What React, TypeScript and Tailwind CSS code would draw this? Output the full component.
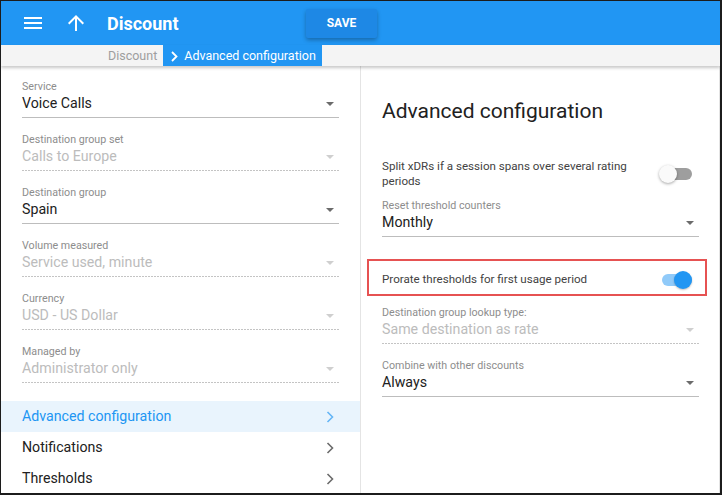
import React from 'react';

const font = { fontFamily: 'Roboto, "Noto Sans", Arial, sans-serif' };

const Caret = ({ disabled }: { disabled?: boolean }) => (
  <svg width="8" height="4" viewBox="0 0 8 4" className="mr-[5px] shrink-0">
    <polygon points="0,0 8,0 4,4" fill={disabled ? '#cfcfcf' : '#6b6b6b'} />
  </svg>
);

const Chevron = ({ color }: { color: string }) => (
  <svg width="8" height="12" viewBox="0 0 8 12" className="shrink-0">
    <path d="M1.5 1l5 5-5 5" fill="none" stroke={color} strokeWidth="1.6" />
  </svg>
);

type FieldProps = {
  label: string;
  value: string;
  disabled?: boolean;
  className?: string;
};

const Field = ({ label, value, disabled, className = '' }: FieldProps) => (
  <div className={className}>
    <div className="text-[10.7px] leading-[13px] text-[#8d8d8d]">{label}</div>
    <div
      className={
        'flex h-[20px] items-center justify-between pt-[2px] text-[14.2px] ' +
        (disabled ? 'text-[#bcbcbc]' : 'text-[#212121]')
      }
    >
      <span>{value}</span>
      <Caret disabled={disabled} />
    </div>
    <div className="mt-[4px]">
      {disabled ? (
        <div className="h-px bg-[linear-gradient(to_right,#c4c4c4_2px,transparent_2px)] bg-[length:3px_1px] bg-repeat-x" />
      ) : (
        <div className="h-px bg-[#bdbdbd]" />
      )}
    </div>
  </div>
);

const Toggle = ({ on }: { on?: boolean }) => (
  <div className="relative mr-[7px] h-[20px] w-[33px] shrink-0">
    <div
      className={
        'absolute left-[3px] right-0 top-[4px] h-[12px] rounded-full ' +
        (on ? 'bg-[#90caf9]' : 'bg-[#9e9e9e]')
      }
    />
    {on ? (
      <div className="absolute right-0 top-px h-[18px] w-[18px] rounded-full bg-[#2196f3] shadow-[0_1px_2px_rgba(0,0,0,0.25)]" />
    ) : (
      <div className="absolute left-0 top-px h-[18px] w-[18px] rounded-full bg-[#fafafa] shadow-[0_1px_3px_rgba(0,0,0,0.35)]" />
    )}
  </div>
);

const NavRow = ({ label, active }: { label: string; active?: boolean }) => (
  <div
    className={
      'flex h-[31px] items-center justify-between pl-[21px] pr-[26px] text-[14.2px] ' +
      (active ? 'bg-[#e9f4fd] text-[#2196f3]' : 'text-[#212121]')
    }
  >
    <span>{label}</span>
    <Chevron color={active ? '#64b5f6' : '#6b6b6b'} />
  </div>
);

export default function App() {
  return (
    <div className="h-[495px] w-[722px] bg-[#1c1c1c] pb-[2px] pl-px pr-[2px] pt-px" style={font}>
      <div className="flex h-full flex-col overflow-hidden bg-white">
        {/* top bar */}
        <div className="flex h-[44px] shrink-0 items-center bg-[#2196f3] pl-[20px] text-white">
          <svg width="24" height="24" viewBox="0 0 24 24" fill="white">
            <path d="M3 18h18v-2H3v2zm0-5h18v-2H3v2zm0-7v2h18V6H3z" />
          </svg>
          <svg width="24" height="24" viewBox="0 0 24 24" fill="white" className="ml-[19px]">
            <path d="M4 12l1.41 1.41L11 7.83V20h2V7.83l5.58 5.59L20 12l-8-8-8 8z" />
          </svg>
          <div className="ml-[19px] w-[199px] text-[18px] font-bold">Discount</div>
          <button className="h-[29px] w-[71px] rounded-[2px] bg-[#1e88e5] text-[12px] font-bold shadow-[0_2px_4px_rgba(0,0,0,0.3)]">
            SAVE
          </button>
        </div>

        {/* breadcrumbs */}
        <div className="relative z-10 flex h-[21px] shrink-0 items-stretch bg-[#f4f4f4] pl-[107px] text-[12.5px] shadow-[0_2px_3px_rgba(0,0,0,0.22)]">
          <span className="flex items-center pr-[6px] pt-[2px] text-[#9e9e9e]">Discount</span>
          <span className="flex items-center bg-[#2196f3] pl-[8px] pr-[6px] pt-[2px] text-white">
            <svg width="7" height="11" viewBox="0 0 7 11">
              <path d="M1 1l4.5 4.5L1 10" fill="none" stroke="white" strokeWidth="1.8" />
            </svg>
            <span className="ml-[6px]">Advanced configuration</span>
          </span>
        </div>

        {/* content */}
        <div className="flex min-h-0 flex-1">
          <div className="w-[360px] shrink-0 border-r border-[#e4e4e4] pt-[14px]">
            <div className="ml-[21px] w-[317px]">
              <Field label="Service" value="Voice Calls" />
              <Field className="mt-[15px]" label="Destination group set" value="Calls to Europe" disabled />
              <Field className="mt-[15px]" label="Destination group" value="Spain" />
              <Field className="mt-[15px]" label="Volume measured" value="Service used, minute" disabled />
              <Field className="mt-[15px]" label="Currency" value="USD - US Dollar" disabled />
              <Field className="mt-[15px]" label="Managed by" value="Administrator only" disabled />
            </div>
            <div className="mt-[18px]">
              <NavRow label="Advanced configuration" active />
              <NavRow label="Notifications" />
              <NavRow label="Thresholds" />
            </div>
          </div>

          <div className="flex-1 border-r border-[#e4e4e4] pl-[21px] pt-[33px]">
            <div className="w-[317px]">
              <h2 className="text-[21px] leading-[24px] text-[#212121]">Advanced configuration</h2>

              <div className="mt-[36px] flex items-center justify-between">
                <div className="w-[262px] text-[11.6px] leading-[15px] text-[#424242]">
                  Split xDRs if a session spans over several rating periods
                </div>
                <Toggle />
              </div>

              <Field className="mt-[10px]" label="Reset threshold counters" value="Monthly" />

              <div className="-ml-[15px] -mr-[8px] mt-[22px] border-2 border-[#e65252] pb-[4px] pl-[13px] pr-[6px] pt-[9px]">
                <div className="flex h-[20px] items-center justify-between">
                  <span className="text-[11.6px] text-[#424242]">Prorate thresholds for first usage period</span>
                  <Toggle on />
                </div>
              </div>

              <Field
                className="mt-[10px]"
                label="Destination group lookup type:"
                value="Same destination as rate"
                disabled
              />
              <Field className="mt-[15px]" label="Combine with other discounts" value="Always" />
            </div>
          </div>
        </div>
      </div>
    </div>
  );
}
